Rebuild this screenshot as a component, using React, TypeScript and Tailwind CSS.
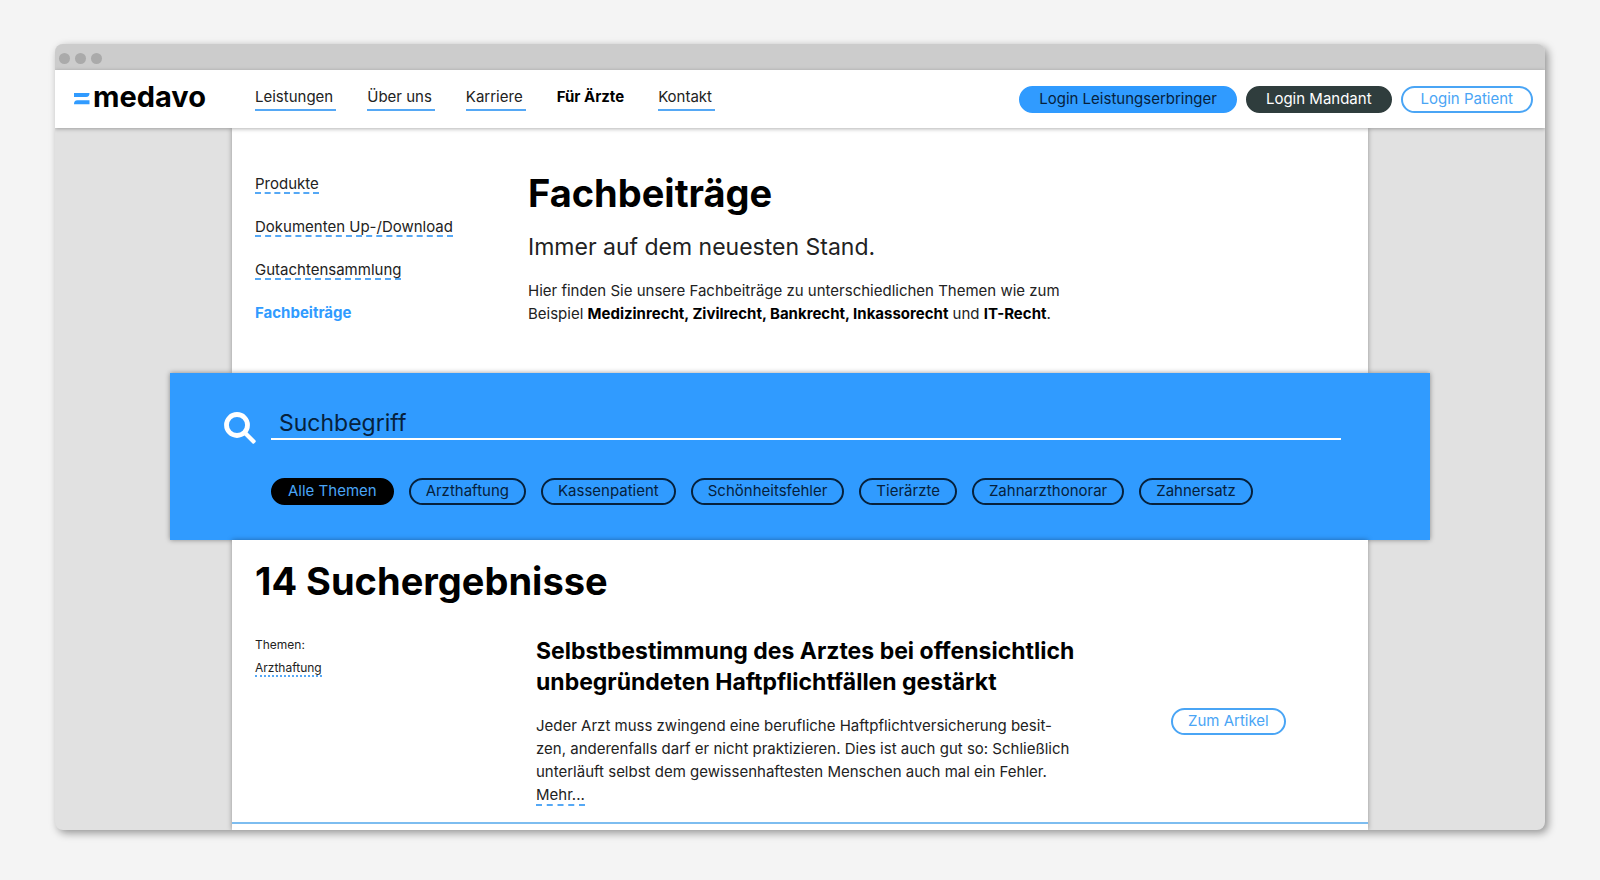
import clsx from "clsx";

const mainNav = [
  { label: "Leistungen" },
  { label: "Über uns" },
  { label: "Karriere" },
  { label: "Für Ärzte", active: true },
  { label: "Kontakt" },
];

const sideNav = [
  { label: "Produkte" },
  { label: "Dokumenten Up-/Download" },
  { label: "Gutachtensammlung" },
  { label: "Fachbeiträge", active: true },
];

const topics = [
  "Alle Themen",
  "Arzthaftung",
  "Kassenpatient",
  "Schönheitsfehler",
  "Tierärzte",
  "Zahnarzthonorar",
  "Zahnersatz",
];

function Logo() {
  return (
    <a href="#" className="flex items-center pb-[2px] text-black">
      <svg width="16" height="12" viewBox="0 0 16 12" className="mt-1 mr-[3px]" aria-hidden="true">
        <path d="M0 0H15.500C15.500 2.500 14.500 4 12 4H0Z" fill="#309bff" />
        <path d="M15.500 11.300H0C0 8.800 1 7.300 3.500 7.300H15.500Z" fill="#309bff" />
      </svg>
      <span className="text-[29px] leading-8 font-bold">medavo</span>
    </a>
  );
}

function Header() {
  return (
    <header className="relative z-20 flex h-[58px] items-center justify-between bg-white pr-3 pl-[19px] shadow-[0_1px_4px_rgba(0,0,0,0.3)]">
      <div className="flex items-center pb-[3px]">
        <div className="w-[181px]">
          <Logo />
        </div>
        <nav className="flex gap-[31px]">
          {mainNav.map(({ label, active }) => (
            <a
              key={label}
              href="#"
              className={clsx(
                "border-b-2 pr-[3px] text-[15px] leading-6",
                active ? "border-transparent font-bold text-black" : "border-[#55a8f5]"
              )}
            >
              {label}
            </a>
          ))}
        </nav>
      </div>
      <div className="flex gap-[9px] text-[15px] leading-[22px]">
        <button className="rounded-full border-2 border-[#309bff] bg-[#309bff] px-[18px] pb-px text-[#06213c]">
          Login Leistungserbringer
        </button>
        <button className="rounded-full border-2 border-[#2f3d3d] bg-[#2f3d3d] px-[18px] pb-px text-white">
          Login Mandant
        </button>
        <button className="rounded-full border-2 border-[#4aa5f5] px-[18px] pb-px text-[#4aa5f5]">
          Login Patient
        </button>
      </div>
    </header>
  );
}

function Intro() {
  return (
    <section className="mx-[177px] grid h-[245px] grid-cols-[273px_1fr] bg-white pt-[43px] pl-[23px] shadow-[0_0_5px_rgba(0,0,0,0.35)]">
      <ul className="flex flex-col gap-6 pt-1">
        {sideNav.map(({ label, active }) => (
          <li key={label} className="flex">
            <a
              href="#"
              className={clsx(
                "border-b-2 border-dashed text-[15px] leading-[17px]",
                active ? "border-transparent font-bold text-[#309bff]" : "border-[#55a8f5]"
              )}
            >
              {label}
            </a>
          </li>
        ))}
      </ul>
      <div>
        <h1 className="text-[38px] leading-[44px] font-bold text-black">Fachbeiträge</h1>
        <p className="mt-[18px] text-[23px] leading-7">Immer auf dem neuesten Stand.</p>
        <p className="mt-[18px] text-[15px] leading-[23px]">
          Hier finden Sie unsere Fachbeiträge zu unterschiedlichen Themen wie zum
          <br />
          Beispiel{" "}
          <strong className="text-black">Medizinrecht, Zivilrecht, Bankrecht, Inkassorecht</strong>{" "}
          und <strong className="text-black">IT-Recht</strong>.
        </p>
      </div>
    </section>
  );
}

function Search() {
  return (
    <section className="relative mx-[115px] h-[167px] bg-[#309bff] pt-[35px] pr-[89px] pl-[54px] shadow-[0_0_5px_rgba(0,0,0,0.4)]">
      <div className="flex">
        <svg width="34" height="34" viewBox="0 0 34 34" className="mt-1 mr-[13px] shrink-0" aria-hidden="true">
          <circle cx="13" cy="13" r="10.500" fill="none" stroke="white" strokeWidth="4.800" />
          <path
            d="M21.300 18.300L31.300 28.300Q32.300 29.300 31.300 30.300L30.300 31.300Q29.300 32.300 28.300 31.300L18.300 21.300Z"
            fill="white"
          />
        </svg>
        <input
          type="text"
          aria-label="Suchbegriff"
          placeholder="Suchbegriff"
          className="h-8 w-full border-b-2 border-white px-2 text-[23px] text-[#06213c] outline-none placeholder:text-[#06213c]"
        />
      </div>
      <div className="mt-8 flex gap-[15px] pl-[47px] text-[15px] leading-[22px]">
        {topics.map((topic, i) => (
          <button
            key={topic}
            className={clsx(
              "rounded-full border-2 px-[15px] pb-px",
              i === 0 ? "border-black bg-black text-[#4aa5f5]" : "border-[#06213c] text-[#06213c]"
            )}
          >
            {topic}
          </button>
        ))}
      </div>
    </section>
  );
}

function Results() {
  return (
    <section className="relative mx-[177px] bg-white pt-[19px] pb-[6px] shadow-[0_0_5px_rgba(0,0,0,0.35)]">
      <h2 className="pl-[23px] text-[38px] leading-[44px] font-bold text-black">14 Suchergebnisse</h2>
      <article className="mt-[33px] grid grid-cols-[281px_1fr_197px] items-center border-b-2 border-[#7dbdf0] pb-4 pl-[23px]">
        <div className="self-start pt-px text-xs leading-[15px]">
          <p>Themen:</p>
          <a href="#" className="mt-2 inline-block border-b-2 border-dotted border-[#55a8f5]">
            Arzthaftung
          </a>
        </div>
        <div>
          <h3 className="text-[23px] leading-[31px] font-bold text-black">
            Selbstbestimmung des Arztes bei offensichtlich
            <br />
            unbegründeten Haftpflichtfällen gestärkt
          </h3>
          <p className="mt-4 text-[15px] leading-[23px]">
            Jeder Arzt muss zwingend eine berufliche Haftpflichtversicherung besit-
            <br />
            zen, anderenfalls darf er nicht praktizieren. Dies ist auch gut so: Schließlich
            <br />
            unterläuft selbst dem gewissenhaftesten Menschen auch mal ein Fehler.
            <br />
            <a href="#" className="border-b-2 border-dashed border-[#55a8f5]">
              Mehr...
            </a>
          </p>
        </div>
        <div>
          <button className="rounded-full border-2 border-[#4aa5f5] px-[15px] pb-px text-[15px] leading-[22px] text-[#4aa5f5]">
            Zum Artikel
          </button>
        </div>
      </article>
    </section>
  );
}

export default function App() {
  return (
    <div className="min-h-screen bg-[#f4f4f4] px-[55px] py-11 font-['Inter',sans-serif] text-[#222]">
      <div className="overflow-hidden rounded-[8px] bg-[#e1e1e1] shadow-[3px_3px_8px_rgba(0,0,0,0.4)]">
        <div className="flex h-[26px] items-center gap-[5px] bg-[#ccc] pt-[3px] pl-1">
          <span className="size-[11px] rounded-full bg-[#aaa]" />
          <span className="size-[11px] rounded-full bg-[#aaa]" />
          <span className="size-[11px] rounded-full bg-[#aaa]" />
        </div>
        <Header />
        <main>
          <Intro />
          <Search />
          <Results />
        </main>
      </div>
    </div>
  );
}
